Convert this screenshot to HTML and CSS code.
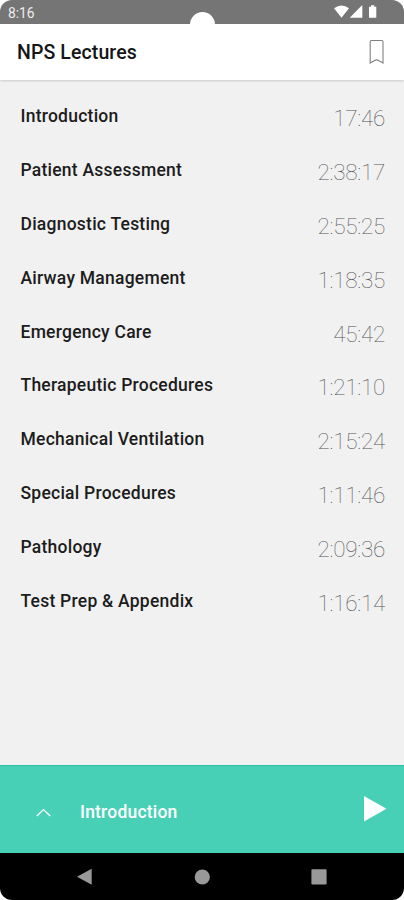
FILE: index.html
```html
<!DOCTYPE html>
<html lang="en">
<head>
<meta charset="utf-8">
<title>NPS Lectures</title>
<link rel="stylesheet" href="styles.css">
</head>
<body>
<div class="phone">
  <div class="status">
    <span class="clock">8:16</span>
    <span class="camera"></span>
    <svg class="signals" width="44" height="14" viewBox="0 0 44 14" fill="#fff">
      <path d="M0 3.3Q7.5-2.3 15 3.3L7.5 12.8Z"/>
      <path d="M15.7 12.7L28.3 0V12.7Z"/>
      <path d="M35 1.7h2V.2h3.3v1.5h2v11H35Z"/>
    </svg>
  </div>
  <header class="header">
    <h1 class="title">NPS Lectures</h1>
    <svg class="bookmark" width="16" height="26" viewBox="0 0 16 26" fill="none" stroke="#808080" stroke-width="1.1">
      <path d="M1.2 24V2.7Q1.2 1.5 2.4 1.5H12.8Q14 1.5 14 2.7V24L9.5 21.4Q7.6 20.3 5.7 21.4Z"/>
    </svg>
  </header>
  <ul class="list">
    <li class="row"><span class="name">Introduction</span><span class="time">17:46</span></li>
    <li class="row"><span class="name">Patient Assessment</span><span class="time">2:38:17</span></li>
    <li class="row"><span class="name">Diagnostic Testing</span><span class="time">2:55:25</span></li>
    <li class="row"><span class="name">Airway Management</span><span class="time">1:18:35</span></li>
    <li class="row"><span class="name">Emergency Care</span><span class="time">45:42</span></li>
    <li class="row"><span class="name">Therapeutic Procedures</span><span class="time">1:21:10</span></li>
    <li class="row"><span class="name">Mechanical Ventilation</span><span class="time">2:15:24</span></li>
    <li class="row"><span class="name">Special Procedures</span><span class="time">1:11:46</span></li>
    <li class="row"><span class="name">Pathology</span><span class="time">2:09:36</span></li>
    <li class="row"><span class="name">Test Prep &amp; Appendix</span><span class="time">1:16:14</span></li>
  </ul>
  <div class="player">
    <svg class="chevron" width="16" height="10" viewBox="0 0 16 10" fill="none" stroke="#fff" stroke-width="1.4"><path d="M.8 8.9L7.5 2.6L14.2 8.9"/></svg>
    <span class="track">Introduction</span>
    <svg class="play" width="23" height="26" viewBox="0 0 23 26" fill="#fff"><path d="M0 0L22.5 12.7L0 25.5Z"/></svg>
  </div>
  <nav class="nav">
    <svg width="16" height="18" viewBox="0 0 16 18" fill="#999"><path d="M0 8.7L14.7 .8V16.8Z"/></svg>
    <svg width="16" height="18" viewBox="0 0 16 18" fill="#999"><circle cx="8.3" cy="9" r="7.6"/></svg>
    <svg width="16" height="18" viewBox="0 0 16 18" fill="#999"><rect x=".4" y="1.2" width="15.2" height="15.4" rx=".8"/></svg>
  </nav>
</div>
</body>
</html>
```
FILE: styles.css
```css
* { box-sizing: border-box; }
body {
  margin: 0;
  background: #fff;
  font-family: Roboto, sans-serif;
}
.phone {
  width: 404px;
  height: 900px;
  display: flex;
  flex-direction: column;
  overflow: hidden;
  border-radius: 12px;
  background: #f1f1f1;
}
.status {
  position: relative;
  flex: none;
  height: 24px;
  padding: 0 26px 0 8px;
  display: flex;
  align-items: center;
  justify-content: space-between;
  background: #757575;
}
.clock {
  font-size: 13.8px;
  line-height: 24px;
  padding-top: 2px;
  color: #eee;
}
.camera {
  position: absolute;
  left: 190px;
  top: 12px;
  width: 25px;
  height: 25px;
  border-radius: 50%;
  background: #fff;
}
.signals { display: block; }
.header {
  flex: none;
  height: 56px;
  padding: 0 19px 0 17px;
  display: flex;
  align-items: center;
  justify-content: space-between;
  background: #fff;
  box-shadow: 0 1px 2px rgba(0, 0, 0, .16);
}
.title {
  margin: 2px 0 0;
  font-size: 19.5px;
  font-weight: 500;
  line-height: 24px;
  letter-spacing: .1px;
  color: #151515;
}
.bookmark { margin-bottom: 1px; }
.list {
  flex: 1;
  margin: 0;
  padding: 9px 19px 0 20.5px;
  list-style: none;
}
.row {
  height: 53.9px;
  display: flex;
  align-items: center;
  justify-content: space-between;
}
.name {
  font-size: 17.5px;
  font-weight: 500;
  letter-spacing: .24px;
  color: #1c1c1c;
}
.time {
  padding-top: 4px;
  font-size: 22.5px;
  font-weight: 100;
  letter-spacing: -.3px;
  color: #555;
}
.player {
  flex: none;
  height: 88px;
  padding: 0 17px 0 36px;
  display: flex;
  align-items: center;
  background: #47d0b6;
  border-top: 1px solid #2cc1a3;
}
.chevron { margin-top: 5px; }
.track {
  margin: 5px auto 0 28px;
  font-size: 17.5px;
  font-weight: 500;
  letter-spacing: .2px;
  color: #fff;
}
.play { margin-bottom: 1px; }
.nav {
  flex: none;
  height: 47px;
  padding: 0 77px;
  display: flex;
  align-items: center;
  justify-content: space-between;
  background: #000;
}
```
